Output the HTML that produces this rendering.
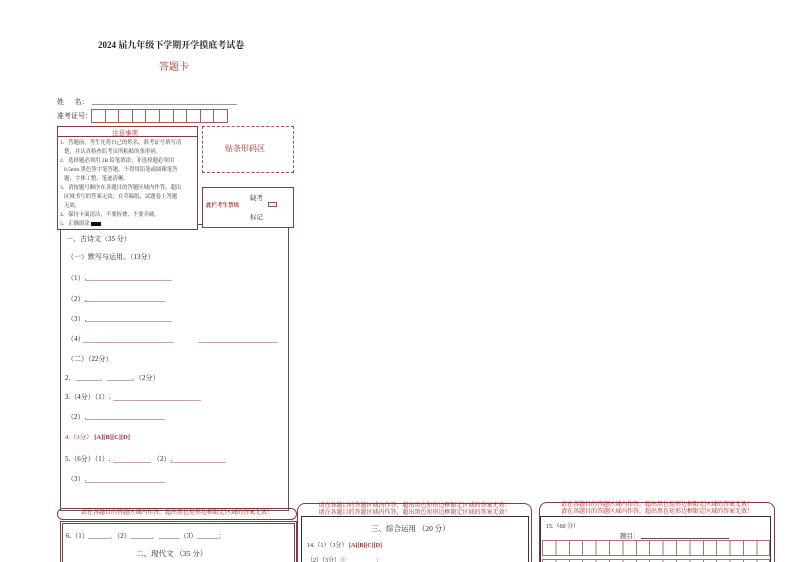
<!DOCTYPE html>
<html style="overflow:hidden;width:794px;height:562px"><head><meta charset="utf-8"><style>
*{margin:0;padding:0;box-sizing:border-box}
body{width:794px;height:562px;background:#fff;position:relative;overflow:hidden;font-family:"Liberation Serif","Noto Serif CJK SC",serif;color:#222}
.a{position:absolute;white-space:nowrap}
.s{font-size:7px}
.r{color:#a0282a}
.ul{position:absolute;height:1px;background:#c9a3a5}
.bx{position:absolute;border:1px solid #8a3a3c}
.band{position:absolute;border:1px solid #8a3a3c;border-radius:8px}
.bt{font-size:6px;color:#b02020;text-align:center;line-height:7px}
</style></head><body>
<div class="a" style="left:98px;top:38px;font-size:9px;font-weight:bold">2024 届九年级下学期开学摸底考试卷</div>
<div class="a r" style="left:159px;top:58px;font-size:10px">答题卡</div>
<div class="a s" style="left:57px;top:97px">姓&nbsp;&nbsp;&nbsp;&nbsp;&nbsp;&nbsp;名：</div>
<div class="ul" style="left:92px;top:104px;width:145px;background:#999"></div>
<div class="a s" style="left:57px;top:111px">准考证号：</div>
<div style="position:absolute;left:91px;top:109px;display:flex">
<div style="width:14.6px;height:14px;border:1px solid #b05a5c;margin-right:-1px"></div><div style="width:14.6px;height:14px;border:1px solid #b05a5c;margin-right:-1px"></div><div style="width:14.6px;height:14px;border:1px solid #b05a5c;margin-right:-1px"></div><div style="width:14.6px;height:14px;border:1px solid #b05a5c;margin-right:-1px"></div><div style="width:14.6px;height:14px;border:1px solid #b05a5c;margin-right:-1px"></div><div style="width:14.6px;height:14px;border:1px solid #b05a5c;margin-right:-1px"></div><div style="width:14.6px;height:14px;border:1px solid #b05a5c;margin-right:-1px"></div><div style="width:14.6px;height:14px;border:1px solid #b05a5c;margin-right:-1px"></div><div style="width:14.6px;height:14px;border:1px solid #b05a5c;margin-right:-1px"></div><div style="width:14.6px;height:14px;border:1px solid #b05a5c;margin-right:-1px"></div>
</div>
<div class="bx" style="left:60px;top:224px;width:229px;height:287px;border-color:#555"></div>
<div class="bx" style="left:57px;top:126px;width:141px;height:104px;background:#fff"></div>
<div style="position:absolute;left:57px;top:136px;width:141px;height:1px;background:#8a3a3c"></div>
<div class="a r" style="left:112px;top:128px;font-size:6.5px">注意事项</div>
<div class="a" style="left:60px;top:139px;font-size:5.4px;line-height:9px;color:#333">1．答题前，考生先将自己的姓名，准考证号填写清<br>&nbsp;&nbsp;&nbsp;楚，并认真检查监考员所粘贴的条形码。<br>2．选择题必须用 2B 铅笔填涂；非选择题必须用<br>&nbsp;&nbsp;&nbsp;0.5mm 黑色签字笔答题，不得用铅笔或圆珠笔答<br>&nbsp;&nbsp;&nbsp;题；字体工整、笔迹清晰。<br>3．请按题号顺序在各题目的答题区域内作答，超出<br>&nbsp;&nbsp;&nbsp;区域书写的答案无效；在草稿纸、试题卷上答题<br>&nbsp;&nbsp;&nbsp;无效。<br>4．保持卡面清洁，不要折叠、不要弄破。<br>5．正确填涂 <span style="display:inline-block;width:10px;height:4px;background:#111;vertical-align:middle"></span></div>
<div class="bx" style="left:202px;top:126px;width:92px;height:47px;border-style:dashed;border-color:#a05050"></div>
<div class="a r" style="left:225px;top:143px;font-size:8px">贴条形码区</div>
<div class="bx" style="left:202px;top:187px;width:92px;height:41px;background:#fff"></div>
<div class="a" style="left:250px;top:193px;font-size:6.5px">缺考</div>
<div class="a r" style="left:206px;top:201px;font-size:5.5px;font-weight:bold">此栏考生禁填</div>
<div style="position:absolute;left:268px;top:202px;width:9px;height:5px;border:1px solid #a05050"></div>
<div class="a" style="left:250px;top:212px;font-size:6.5px">标记</div>
<div class="a s" style="left:66px;top:234px">一、古诗文（35 分）</div>
<div class="a s" style="left:67px;top:252px">（一）默写与运用。（13分）</div>
<div class="a s" style="left:67px;top:273px">（1）.</div><div class="ul" style="left:85px;top:280px;width:87px"></div>
<div class="a s" style="left:67px;top:294px">（2）.</div><div class="ul" style="left:85px;top:301px;width:80px"></div>
<div class="a s" style="left:67px;top:314px">（3）.</div><div class="ul" style="left:85px;top:321px;width:87px"></div>
<div class="a s" style="left:67px;top:334px">（4）</div><div class="ul" style="left:83px;top:342px;width:91px"></div><div class="ul" style="left:198px;top:342px;width:80px"></div>
<div class="a s" style="left:67px;top:354px">（二）（22分）</div>
<div class="a s" style="left:65px;top:373px">2．_______，_______。（2分）</div>
<div class="a s" style="left:65px;top:392px">3.（4分）（1）.</div><div class="ul" style="left:113px;top:400px;width:88px"></div>
<div class="a s" style="left:67px;top:412px">（2）.</div><div class="ul" style="left:85px;top:419px;width:80px"></div>
<div class="a r" style="left:65px;top:432px;font-size:6.5px">4.（3分） <b>[A][B][C][D]</b></div>
<div class="a s" style="left:65px;top:454px">5.（6分）（1）.</div><div class="ul" style="left:113px;top:462px;width:38px"></div>
<div class="a s" style="left:153px;top:454px">（2）.</div><div class="ul" style="left:170px;top:462px;width:56px"></div>
<div class="a s" style="left:67px;top:474px">（3）.</div><div class="ul" style="left:85px;top:482px;width:80px"></div>
<div class="band" style="left:57px;top:508px;width:240px;height:12px"></div>
<div class="a bt" style="left:60px;top:510px;width:234px">请在各题目的答题区域内作答，超出黑色矩形边框限定区域的答案无效！</div>
<div class="bx" style="left:60px;top:521px;width:237px;height:45px;border-color:#8a3a3c"></div>
<div class="bx" style="left:62px;top:523px;width:233px;height:45px;border-color:#555"></div>
<div class="a s" style="left:66px;top:531px">6.（1）______，（2）______，______（3）______；</div>
<div class="a" style="left:136px;top:548px;font-size:7.5px">二、现代文 （35 分）</div>
<div class="band" style="left:297px;top:503px;width:235px;height:70px"></div>
<div class="a bt" style="left:297px;top:503px;width:235px">请在各题目的答题区域内作答，超出黑色矩形边框限定区域的答案无效！<br>请在各题目的答题区域内作答，超出黑色矩形边框限定区域的答案无效！</div>
<div class="bx" style="left:301px;top:516px;width:228px;height:50px;border-color:#333"></div>
<div class="a" style="left:371px;top:523px;font-size:7.5px">三、综合运用 （20 分）</div>
<div class="a" style="left:307px;top:540px;font-size:6px">14.（1）（3分） <b class="r">[A][B][C][D]</b></div>
<div class="a" style="left:307px;top:555px;font-size:6px">（2）（3分）①&nbsp;&nbsp;&nbsp;&nbsp;&nbsp;&nbsp;&nbsp;&nbsp;&nbsp;&nbsp;&nbsp;&nbsp;&nbsp;&nbsp;&nbsp;&nbsp;&nbsp;&nbsp;&nbsp;&nbsp;；</div>
<div class="band" style="left:539px;top:502px;width:236px;height:70px"></div>
<div class="a bt" style="left:539px;top:502px;width:236px">请在各题目的答题区域内作答，超出黑色矩形边框限定区域的答案无效！<br>请在各题目的答题区域内作答，超出黑色矩形边框限定区域的答案无效！</div>
<div class="bx" style="left:540px;top:516px;width:231px;height:50px;border-color:#333"></div>
<div class="a" style="left:546px;top:521px;font-size:6px">15.（60 分）</div>
<div class="a" style="left:620px;top:531px;font-size:6.5px">题目：</div><div class="ul" style="left:641px;top:538px;width:88px;background:#555"></div>
<div style="position:absolute;left:542px;top:540px;width:228px;height:16px;border:1px solid #b07070;background:repeating-linear-gradient(90deg,transparent 0,transparent 12.4px,#b07070 12.4px,#b07070 13.4px)"></div>
<div style="position:absolute;left:542px;top:559px;width:228px;height:16px;border:1px solid #b07070;background:repeating-linear-gradient(90deg,transparent 0,transparent 12.4px,#b07070 12.4px,#b07070 13.4px)"></div>
</body></html>
